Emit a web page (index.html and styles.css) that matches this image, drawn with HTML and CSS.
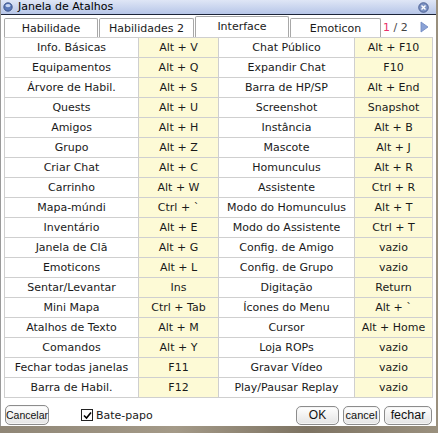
FILE: index.html
```html
<!DOCTYPE html>
<html>
<head>
<meta charset="utf-8">
<link rel="stylesheet" href="styles.css">
</head>
<body>
<div class="window">
  <div class="titlebar">
    <svg class="ticon" width="10" height="10" viewBox="0 0 10 10"><circle cx="5" cy="5" r="4.2" fill="#5a78b8" stroke="#2c4478" stroke-width="0.8"/><ellipse cx="5" cy="3.6" rx="2.6" ry="1.6" fill="#c8d6f2"/></svg>
    <span class="ttext">Janela de Atalhos</span>
    <svg class="close" width="11" height="11" viewBox="0 0 11 11"><circle cx="5.5" cy="5.5" r="4.8" fill="#7d93c4" stroke="#3b5187" stroke-width="0.8"/><path d="M3.5 3.5 L7.5 7.5 M7.5 3.5 L3.5 7.5" stroke="#fff" stroke-width="1.4"/></svg>
  </div>
  <div class="tabs">
    <div class="tab">Habilidade</div>
    <div class="tab">Habilidades 2</div>
    <div class="tab active">Interface</div>
    <div class="tab">Emoticon</div>
    <div class="pager"><span class="pg1">1</span> / 2</div>
    <svg class="arrow" width="9" height="12" viewBox="0 0 9 12"><path d="M1 1 L8 6 L1 11 Z" fill="#8aa2d6" stroke="#6f88c0" stroke-width="0.8"/></svg>
  </div>
  <table class="grid">
    <tr><td>Info. Básicas</td><td class="k">Alt + V</td><td>Chat Público</td><td class="k">Alt + F10</td></tr>
    <tr><td>Equipamentos</td><td class="k">Alt + Q</td><td>Expandir Chat</td><td class="k">F10</td></tr>
    <tr><td>Árvore de Habil.</td><td class="k">Alt + S</td><td>Barra de HP/SP</td><td class="k">Alt + End</td></tr>
    <tr><td>Quests</td><td class="k">Alt + U</td><td>Screenshot</td><td class="k">Snapshot</td></tr>
    <tr><td>Amigos</td><td class="k">Alt + H</td><td>Instância</td><td class="k">Alt + B</td></tr>
    <tr><td>Grupo</td><td class="k">Alt + Z</td><td>Mascote</td><td class="k">Alt + J</td></tr>
    <tr><td>Criar Chat</td><td class="k">Alt + C</td><td>Homunculus</td><td class="k">Alt + R</td></tr>
    <tr><td>Carrinho</td><td class="k">Alt + W</td><td>Assistente</td><td class="k">Ctrl + R</td></tr>
    <tr><td>Mapa-múndi</td><td class="k">Ctrl + `</td><td>Modo do Homunculus</td><td class="k">Alt + T</td></tr>
    <tr><td>Inventário</td><td class="k">Alt + E</td><td>Modo do Assistente</td><td class="k">Ctrl + T</td></tr>
    <tr><td>Janela de Clã</td><td class="k">Alt + G</td><td>Config. de Amigo</td><td class="k">vazio</td></tr>
    <tr><td>Emoticons</td><td class="k">Alt + L</td><td>Config. de Grupo</td><td class="k">vazio</td></tr>
    <tr><td>Sentar/Levantar</td><td class="k">Ins</td><td>Digitação</td><td class="k">Return</td></tr>
    <tr><td>Mini Mapa</td><td class="k">Ctrl + Tab</td><td>Ícones do Menu</td><td class="k">Alt + `</td></tr>
    <tr><td>Atalhos de Texto</td><td class="k">Alt + M</td><td>Cursor</td><td class="k">Alt + Home</td></tr>
    <tr><td>Comandos</td><td class="k">Alt + Y</td><td>Loja ROPs</td><td class="k">vazio</td></tr>
    <tr><td>Fechar todas janelas</td><td class="k">F11</td><td>Gravar Vídeo</td><td class="k">vazio</td></tr>
    <tr><td>Barra de Habil.</td><td class="k">F12</td><td>Play/Pausar Replay</td><td class="k">vazio</td></tr>
  </table>
  <div class="footer">
    <button class="btn small">Cancelar</button>
    <label class="chk"><span class="box"><svg width="9" height="9" viewBox="0 0 9 9"><path d="M1 4.5 L3.5 7 L8 1.5" fill="none" stroke="#000" stroke-width="1.6"/></svg></span>Bate-papo</label>
    <div class="spacer"></div>
    <button class="btn ok">OK</button>
    <button class="btn cn">cancel</button>
    <button class="btn fc">fechar</button>
  </div>
</div>
</body>
</html>
```
FILE: styles.css
```css
html, body { margin: 0; padding: 0; }
body {
  width: 438px; height: 433px; overflow: hidden;
  background: linear-gradient(90deg, #8f8676, #a49a88 40%, #7d7362 70%, #9a907e);
  font-family: "DejaVu Sans", Verdana, sans-serif;
  font-size: 11px; color: #1a1a1a;
}
.window {
  width: 436px; height: 426px;
  background: #fff;
  border-left: 1px solid #9a9a9a;
  box-sizing: border-box;
}
.titlebar {
  height: 15px;
  background: linear-gradient(#dfe6f6, #b7c6e8);
  border-bottom: 1px solid #1c2438;
  display: flex; align-items: center;
  padding-left: 2px;
  box-sizing: border-box;
}
.ticon { margin-right: 5px; }
.ttext { font-size: 11px; color: #000; line-height: 14px; }
.close { margin-left: auto; margin-right: 7px; }
.tabs {
  display: flex; align-items: flex-end;
  height: 22px;
  padding-left: 3px;
}
.tab {
  height: 19px;
  box-sizing: border-box;
  border: 1px solid #a8a8a8;
  border-bottom: none;
  border-radius: 2px 2px 0 0;
  text-align: center;
  line-height: 19px;
  margin-right: 1px;
  background: #fff;
}
.tab.active { height: 21px; line-height: 19px; }
.tab:nth-child(1) { width: 94px; }
.tab:nth-child(2) { width: 95px; }
.tab:nth-child(3) { width: 94px; }
.tab:nth-child(4) { width: 91px; }
.pager { font-size: 11px; color: #444; line-height: 18px; margin-left: 1px; }
.pg1 { color: #e8306a; }
.arrow { margin-left: 12px; margin-bottom: 4px; }
.grid {
  border-collapse: collapse;
  margin-left: 3px;
  width: 429px;
  table-layout: fixed;
}
.grid td {
  height: 19px; padding: 0;
  border: 1px solid #cfcfcf;
  text-align: center;
  white-space: nowrap;
  overflow: hidden;
  line-height: 18px;
}
.grid td:nth-child(1) { width: 133px; }
.grid td:nth-child(2) { width: 79px; }
.grid td:nth-child(3) { width: 135px; }
.grid td:nth-child(4) { width: 77px; }
.grid td.k { background: #fdfad6; }
.footer {
  display: flex; align-items: center;
  padding: 5px 4px 0 3px;
  height: 24px;
}
.btn {
  font-family: "Liberation Sans", Arial, sans-serif;
  font-size: 12px; color: #111;
  height: 19px;
  padding: 0;
  border: 1px solid #8c8c8c;
  border-radius: 5px;
  background: linear-gradient(#ffffff, #e4e4e4);
  box-shadow: inset 0 0 0 1px #f4f4f4;
  margin-left: 4px;
  line-height: 16px;
  text-align: center;
}
.btn.small { font-size: 10.5px; margin-left: 1px; width: 44px; height: 20px; }
.btn.ok { width: 43px; }
.btn.cn { width: 37px; font-size: 11px; }
.btn.fc { width: 48px; font-size: 12.5px; }
.chk { display: flex; align-items: center; margin-left: 32px; font-size: 11px; }
.box {
  width: 10px; height: 10px; border: 1px solid #222;
  display: inline-flex; align-items: center; justify-content: center;
  margin-right: 3px; background: #fff;
}
.spacer { flex: 1; }
```
